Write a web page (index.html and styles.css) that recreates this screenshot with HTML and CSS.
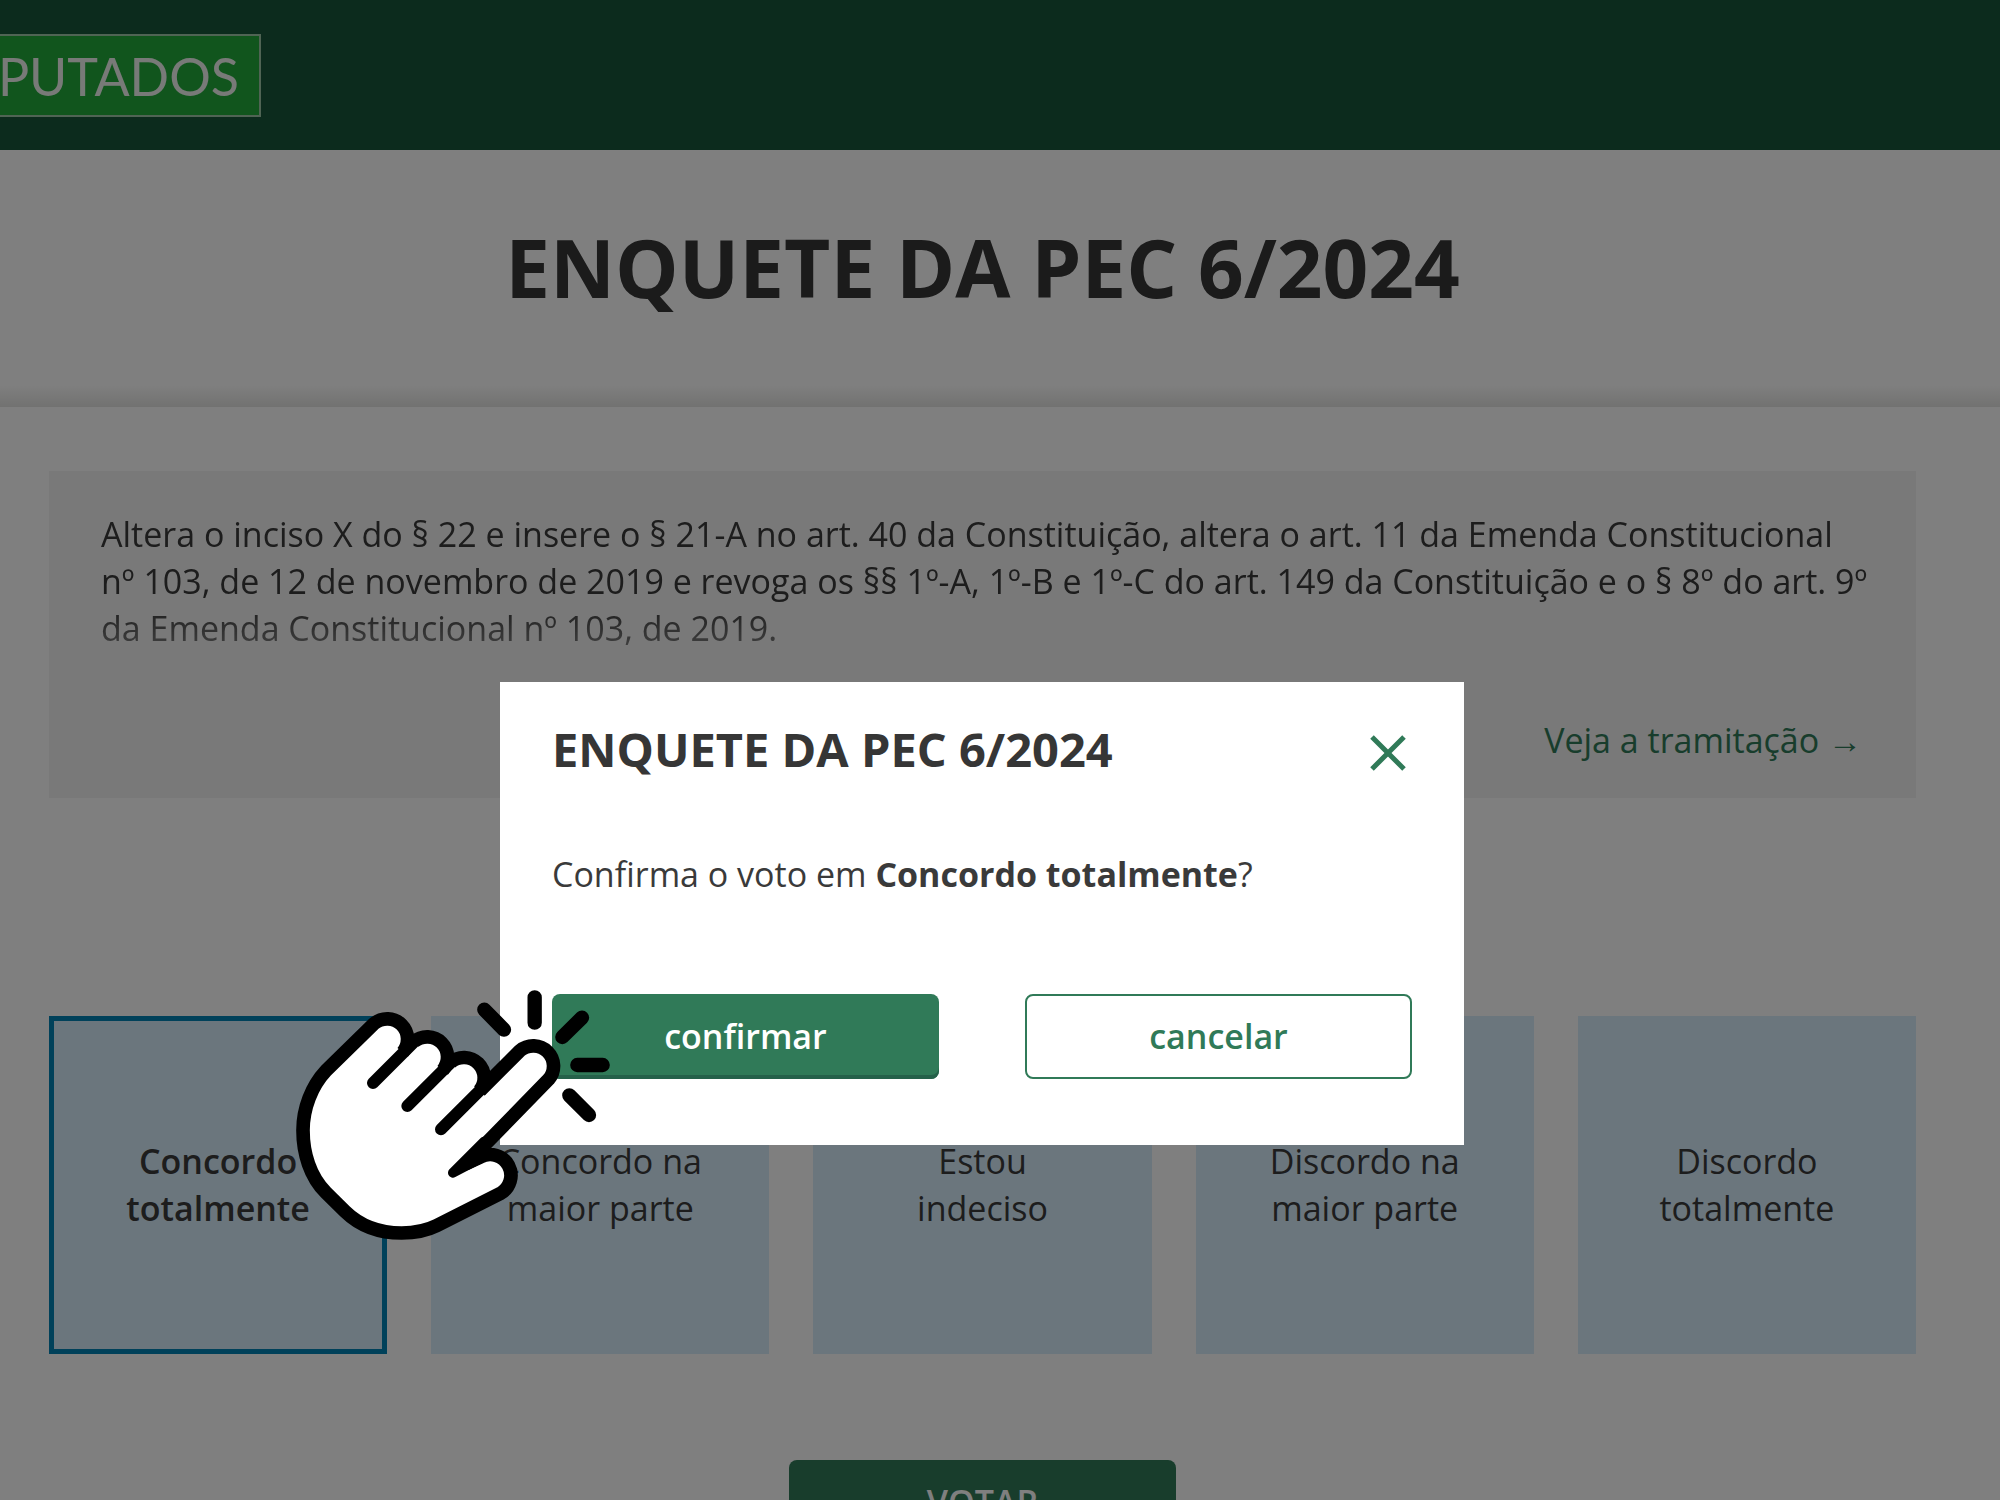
FILE: index.html
```html
<!DOCTYPE html>
<html lang="pt-BR">
<head>
    <meta charset="UTF-8">
    <meta name="viewport" content="width=device-width, initial-scale=1.0">
    <title>Enquete da PEC 6/2024</title>
    <link rel="stylesheet" href="styles.css">
</head>
<body class="modal-open">
    <header class="topo">
        <a href="#" class="logo">PUTADOS</a>
    </header>

    <div class="titulo-faixa">
        <h1 class="titulo">ENQUETE DA PEC 6/2024</h1>
    </div>

    <main class="conteudo">
        <section class="ementa">
            <p class="ementa-texto">Altera o inciso X do § 22 e insere o § 21-A no art. 40 da Constituição, altera o art. 11 da Emenda Constitucional nº 103, de 12 de novembro de 2019 e revoga os §§ 1º-A, 1º-B e 1º-C do art. 149 da Constituição e o § 8º do art. 9º da Emenda Constitucional nº 103, de 2019.</p>
            <a href="#" class="ementa-link">Veja a tramitação →</a>
        </section>

        <form class="enquete">
            <div class="opcoes">
                <label class="opcao">
                    <input type="radio" name="voto" value="1" checked>
                    <span>Concordo<br>totalmente</span>
                </label>
                <label class="opcao">
                    <input type="radio" name="voto" value="2">
                    <span>Concordo na<br>maior parte</span>
                </label>
                <label class="opcao">
                    <input type="radio" name="voto" value="3">
                    <span>Estou<br>indeciso</span>
                </label>
                <label class="opcao">
                    <input type="radio" name="voto" value="4">
                    <span>Discordo na<br>maior parte</span>
                </label>
                <label class="opcao">
                    <input type="radio" name="voto" value="5">
                    <span>Discordo<br>totalmente</span>
                </label>
            </div>
            <button type="button" class="botao botao-votar">VOTAR</button>
        </form>
    </main>

    <div class="overlay">
        <div class="modal" role="dialog" aria-modal="true" aria-labelledby="modalTitulo">
            <div class="modal-topo">
                <h2 class="modal-titulo" id="modalTitulo">ENQUETE DA PEC 6/2024</h2>
                <button type="button" class="fechar" aria-label="Fechar">
                    <svg viewBox="0 0 38 38" fill="none" stroke="currentColor" stroke-width="5">
                        <path d="M3 3 35 35M35 3 3 35"/>
                    </svg>
                </button>
            </div>
            <p class="modal-texto">Confirma o voto em <strong>Concordo totalmente</strong>?</p>
            <div class="modal-botoes">
                <button type="button" class="botao">confirmar</button>
                <button type="button" class="botao botao-contorno">cancelar</button>
            </div>

            <svg class="mao" viewBox="0 0 1050 870" fill="none" stroke="#000" aria-hidden="true">
                <path fill="#fff" stroke="none" d="M138 302 282 161A61 61 0 0 1 368 247L279 339 402 215A61 61 0 0 1 488 301L382 408 512 277A61 61 0 0 1 598 363L483 478 720 242A61 61 0 0 1 806 328L519 609 600 562A62 62 0 0 1 660 671L470 767C440 782 405 789 365 789C300 789 240 768 195 724L138 668C90 620 69 550 69 485C69 415 95 348 138 302Z"/>
                <!-- contorno -->
                <g stroke-width="41" stroke-linejoin="round">
                    <path d="M368 247A61 61 0 0 0 282 161L138 302C95 348 69 415 69 481C69 550 90 620 138 668L195 724C240 768 300 789 365 789C405 789 440 782 470 767L660 671A62 62 0 0 0 601 561L560 580 806 328A61 61 0 0 0 720 242L600 362"/>
                    <path d="M402 215A61 61 0 0 1 488 301M512 277A61 61 0 0 1 598 363"/>
                </g>
                <!-- dobras entre os dedos -->
                <g stroke-width="36" stroke-linecap="round">
                    <path d="M279 339 402 216M382 408 512 278M483 478 680 281"/>
                </g>
                <path d="M519 608 612 515M519 608 605 563" stroke-width="30" stroke-linecap="round"/>
                <!-- raios do clique -->
                <g stroke-width="43" stroke-linecap="round">
                    <path d="M764 82V158M613 119 672 179M906 143 847 201M892 285H968M868 376 927 435"/>
                </g>
            </svg>
        </div>
    </div>
</body>
</html>
```
FILE: styles.css
```css
* {
    margin: 0;
    padding: 0;
    box-sizing: border-box;
}

body {
    font-family: 'Open Sans', 'Noto Sans', sans-serif;
    font-size: 34px;
    line-height: 47px;
    background: #fff;
    color: #3a3a3a;
}

.modal-open {
    height: 100vh;
    overflow: hidden;
}

a {
    color: #307a58;
    text-decoration: none;
}

.topo {
    height: 150px;
    padding: 34px 0;
    background: #18563a;
}

.logo {
    display: flex;
    align-items: center;
    justify-content: flex-end;
    width: 261px;
    height: 83px;
    padding: 2px 20px 0 0;
    border: 2px solid #a0c8a8;
    border-left: none;
    background: #22aa3a;
    color: #f0f4f0;
    font-family: Lato, sans-serif;
    font-size: 52px;
}

.titulo-faixa {
    height: 257px;
    padding: 62px 84px 0 49px;
    background: linear-gradient(to top, #e4e4e2, #fff 22px);
}

.titulo {
    font-size: 80px;
    line-height: 110px;
    text-align: center;
    color: #363636;
}

.conteudo {
    padding: 64px 84px 60px 49px;
}

.ementa {
    display: flex;
    flex-direction: column;
    padding: 40px 44px 34px 52px;
    background: #f2f2f2;
}

.ementa-texto {
    height: 206px;
    -webkit-mask-image: linear-gradient(#000 94px, transparent 206px);
    mask-image: linear-gradient(#000 94px, transparent 206px);
}

.ementa-link {
    align-self: flex-end;
    padding-right: 10px;
}

.enquete {
    display: flex;
    flex-direction: column;
    align-items: center;
    gap: 106px;
    padding-top: 218px;
}

.opcoes {
    display: grid;
    grid-template-columns: repeat(5, 1fr);
    gap: 44px;
    width: 100%;
}

.opcao {
    display: flex;
    align-items: center;
    justify-content: center;
    position: relative;
    aspect-ratio: 1;
    background: #d6ecfa;
    text-align: center;
    cursor: pointer;
}

.opcao input {
    position: absolute;
    opacity: 0;
}

.opcao:has(:checked) {
    border: 5px solid #0082b4;
    font-weight: 600;
}

.botao {
    width: 387px;
    height: 85px;
    border: none;
    border-radius: 8px;
    background: #307a58;
    box-shadow: inset 0 -4px #25614a;
    color: #fff;
    font: inherit;
    font-weight: 600;
    cursor: pointer;
}

.botao-contorno {
    border: 2px solid #307a58;
    background: #fff;
    box-shadow: none;
    color: #307a58;
}

.overlay {
    display: flex;
    align-items: flex-start;
    justify-content: center;
    position: fixed;
    inset: 0;
    padding: 682px 85px 0 49px;
    background: rgba(0,0,0,0.5);
}

.modal {
    position: relative;
    width: 964px;
    padding: 34px 52px 66px;
    background: #fff;
}

.modal-topo {
    display: flex;
    align-items: flex-end;
    justify-content: space-between;
}

.modal-titulo {
    font-size: 47px;
    line-height: 66px;
    color: #363636;
}

.fechar {
    width: 48px;
    height: 58px;
    padding: 5px;
    border: none;
    background: none;
    color: #307a58;
    cursor: pointer;
}

.fechar svg {
    display: block;
}

.modal-texto {
    padding: 69px 0 96px;
}

.modal-texto strong {
    font-weight: 700;
}

.modal-botoes {
    display: flex;
    justify-content: space-between;
}

/* mão sobre o botão confirmar */
.mao {
    position: absolute;
    left: -220px;
    top: 288px;
    width: 350px;
    height: 290px;
    pointer-events: none;
}
```
